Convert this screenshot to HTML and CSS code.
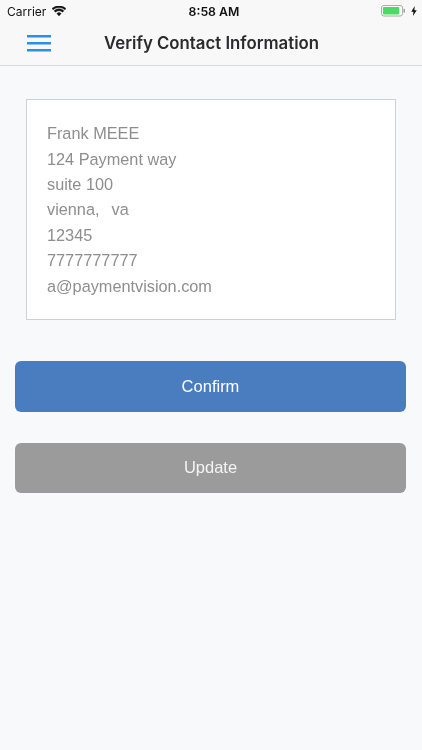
FILE: index.html
```html
<!DOCTYPE html>
<html lang="en">
<head>
<meta charset="utf-8">
<title>Verify Contact Information</title>
<link rel="stylesheet" href="styles.css">
</head>
<body>
<div class="app">
  <header class="top">
    <div class="status">
      <div class="status-left">
        <span class="carrier">Carrier</span>
        <svg class="wifi" width="14" height="10.3" viewBox="0 0 15 11"><path d="M7.5 10.6 5.2 8.1a3.3 3.3 0 0 1 4.6 0zM3.7 6.6 2.3 5.1a7.5 7.5 0 0 1 10.4 0l-1.4 1.5a5.5 5.5 0 0 0-7.6 0zM1.2 4 0 2.7a10.9 10.9 0 0 1 15 0L13.8 4a9.2 9.2 0 0 0-12.6 0z" fill="#111" stroke="#111" stroke-width="0.5"/></svg>
      </div>
      <span class="time">8:58 AM</span>
      <div class="status-right">
        <svg width="24" height="11.5" viewBox="0 0 25 12"><rect x="0.5" y="0.5" width="22" height="11" rx="2.5" fill="#fafafa" stroke="#a3a8a3"/><rect x="2" y="2" width="17" height="8" rx="1.2" fill="#4cd964"/><rect x="23.5" y="4" width="1.5" height="4" rx="0.7" fill="#9a9a9a"/></svg>
        <svg width="6" height="10" viewBox="0 0 6 11"><path d="M3.8 0 0 6.2h2.4L1.8 11 6 4.6H3.4z" fill="#111"/></svg>
      </div>
    </div>
    <nav class="nav">
      <svg class="menu" width="24" height="17" viewBox="0 0 24 17"><path d="M0 1.2h24M0 8.2h24M0 15.2h24" stroke="#2b8fe6" stroke-width="2.4"/></svg>
      <h1 class="title">Verify Contact Information</h1>
    </nav>
  </header>
  <main class="content">
    <section class="card">
      <p class="line">Frank MEEE</p>
      <p class="line">124 Payment way</p>
      <p class="line">suite 100</p>
      <p class="line line-city">vienna,&nbsp;&nbsp;va</p>
      <p class="line">12345</p>
      <p class="line">7777777777</p>
      <p class="line">a@paymentvision.com</p>
    </section>
    <div class="actions">
      <button class="btn btn-confirm" type="button">Confirm</button>
      <button class="btn btn-update" type="button">Update</button>
    </div>
  </main>
</div>
</body>
</html>
```
FILE: styles.css
```css
* { box-sizing: border-box; }
html, body { margin: 0; padding: 0; }
body {
  width: 422px;
  height: 750px;
  overflow: hidden;
  background: #f7f9fb;
  font-family: "Liberation Sans", Arial, sans-serif;
}
.app { display: flex; flex-direction: column; height: 750px; will-change: transform; }
.top {
  height: 66px;
  background: #f8f8f8;
  border-bottom: 1px solid #d9d9dc;
}
.status {
  height: 22px;
  padding: 0 5px 0 7px;
  display: grid;
  grid-template-columns: 1fr auto 1fr;
  align-items: center;
  color: #111;
  font-size: 13px;
}
.status-left { display: flex; align-items: center; gap: 6px; }
.carrier { font-family: Inter, "Liberation Sans", sans-serif; font-size: 12px; }
.time { padding-left: 4px; font-family: Inter, "Liberation Sans", sans-serif; font-weight: 600; font-size: 12.3px; }
.status-right { display: flex; align-items: center; justify-content: flex-end; gap: 6px; }
.nav {
  height: 42px;
  padding-left: 27px;
  display: flex;
  align-items: center;
}
.menu { flex: none; }
.title {
  margin: 0 0 0 53px;
  font-family: Inter, "Liberation Sans", sans-serif;
  font-size: 16.8px;
  font-weight: 600;
  color: #2b2b2d;
  white-space: nowrap;
}
.content { flex: 1; padding: 33px 16px 0 15px; }
.card {
  margin: 0 10px 0 11px;
  height: 221px;
  padding: 21.3px 20px;
  background: #fff;
  border: 1px solid #cfd1d4;
}
.line {
  margin: 0;
  height: 25.4px;
  line-height: 25.4px;
  font-size: 16.3px;
  color: #8e8e8e;
  white-space: nowrap;
}
.line-city { word-spacing: 1.5px; }
.actions {
  margin-top: 41px;
  display: flex;
  flex-direction: column;
  gap: 31px;
}
.btn {
  display: block;
  width: 100%;
  height: 50.5px;
  padding: 0;
  border: 0;
  border-radius: 6px;
  color: #fff;
  font-family: "Liberation Sans", Arial, sans-serif;
  font-size: 16.5px;
}
.btn-confirm { background: #4a7dbf; }
.btn-update { background: #9b9b9b; color: #f4f4f4; }
```
